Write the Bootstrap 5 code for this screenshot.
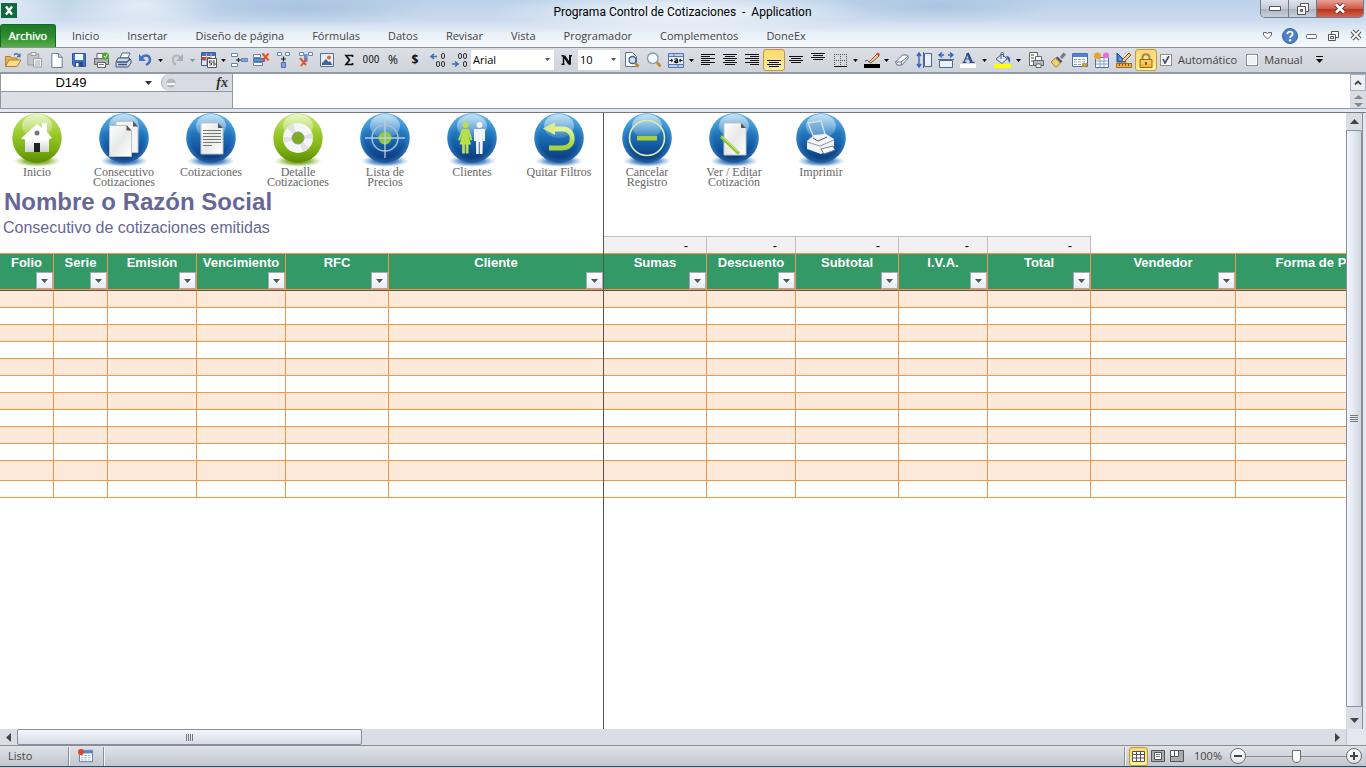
<!DOCTYPE html>
<html lang="es">
<head>
<meta charset="utf-8">
<meta name="viewport" content="width=device-width, initial-scale=1">
<title>Programa Control de Cotizaciones</title>
<link href="https://cdn.jsdelivr.net/npm/bootstrap@5.3.0/dist/css/bootstrap.min.css" rel="stylesheet">
<style>
  body { font-family: "Open Sans", "Noto Sans", sans-serif; font-size: 11px; line-height: 16px; color: #444; background: #fff; }
  button, select, input { font: inherit; color: inherit; }
  button { background: none; border: 0; padding: 0; }
  svg { display: block; flex: none; }

  /* Window caption and ribbon tabs */
  .chrome { background:
      radial-gradient(ellipse 60px 40px at 10px 0, rgba(255,255,255,.5), rgba(255,255,255,0)),
      radial-gradient(ellipse 80px 36px at 140px 4px, rgba(255,255,255,.55), rgba(255,255,255,0)),
      radial-gradient(ellipse 190px 22px at 682px 12px, rgba(255,255,255,.8), rgba(255,255,255,0)),
      radial-gradient(ellipse 140px 20px at 300px 8px, rgba(140,172,212,.45), rgba(140,172,212,0)),
      radial-gradient(ellipse 120px 18px at 940px 6px, rgba(140,172,212,.4), rgba(140,172,212,0)),
      linear-gradient(#bcd2e9 0, #cbdbee 20px, #e9f0f8 34px, #f6f8fb 47px);
    border-bottom: 1px solid #8a919b; }
  .caption-bar { height: 24px; }
  .caption-text { font-family: Roboto, "Open Sans", sans-serif; font-size: 12px; color: #000; }
  .app-mark { margin: 3px 0 0 1px; }
  .win-buttons { width: 104px; height: 18px; border: 1px solid #6d7c8e; border-top: 0; border-radius: 0 0 5px 5px; overflow: hidden; margin-right: 2px; }
  .win-buttons button { width: 28px; background: linear-gradient(#dde5ee, #c4cbd4 50%, #a9b1bc 51%, #c9d2dc); border-right: 1px solid #6d7c8e; }
  .win-buttons .btn-shut { background: linear-gradient(#e6a296, #cf5b48 50%, #b8301b 51%, #d4664b); border: 0; }
  .tab-strip { height: 23px; }
  .tab-file { width: 56px; height: 23px; color: #fff; background: linear-gradient(#1f7a26, #2d8b30 50%, #58b040); border: 1px solid #17672a; border-bottom: 0; border-radius: 3px 3px 0 0; text-shadow: 0 0 1px #fff; }
  .tab-list { gap: 28px; margin-left: 16px; }
  .tab-list a { color: #444; text-decoration: none; }
  .tab-tools { gap: 6px; margin-right: 2px; }
  .tab-tools button { width: 16px; height: 16px; }

  /* Quick toolbar */
  .quickbar { height: 26px; background: linear-gradient(#dcdfe5, #cfd3da); border-bottom: 2px solid #8f98a5; padding-left: 2px; }
  .quickbar button { width: 22px; height: 22px; display: flex; align-items: center; justify-content: center; }
  .quickbar .drop { width: 10px; padding-right: 2px; }
  .quickbar .drop-near { width: 8px; }
  .quickbar .drop-wide { width: 12px; }
  .is-on { background: linear-gradient(#fbd774, #ffe57c 60%, #fff2a0); border: 1px solid #c29a3c; border-radius: 3px; }
  .glyph { color: #111; font-size: 12px; }
  .glyph-thin { font-family: "Liberation Sans Narrow", "DejaVu Sans Condensed", sans-serif; font-size: 10px; }
  .pick { position: relative; background: #fff; height: 20px; margin: 0 1px; }
  .pick select { appearance: none; width: 100%; height: 20px; border: 0; background: none; padding: 0 2px; color: #000; }
  .pick svg { position: absolute; right: 4px; top: 8px; pointer-events: none; }
  .pick-font { width: 83px; }
  .pick-size { width: 42px; }
  .tick { gap: 6px; margin-left: 3px; margin-right: 6px; font-size: 11px; }
  .tick input { appearance: none; width: 12px; height: 12px; border: 1px solid #8c8f94; background: #f0f1f3; box-shadow: inset 0 0 0 1px #fff; margin: 0; }
  .tick input:checked { background: #f0f1f3 url("data:image/svg+xml,%3Csvg xmlns='http://www.w3.org/2000/svg' viewBox='0 0 10 10'%3E%3Cpath d='M2 4l2 4 4-7' fill='none' stroke='%23454b55' stroke-width='1.6'/%3E%3C/svg%3E") center/10px no-repeat; }

  /* Formula bar */
  .formula { height: 35px; border-bottom: 1px solid #8f98a5; }
  .formula-side { width: 233px; background: #dcdfe5; border-right: 1px solid #8f98a5; border-left: 1px solid #8f98a5; }
  .formula-name { height: 18px; border-bottom: 1px solid #8f98a5; }
  .name-box { width: 160px; background: #fff; }
  .name-box input { width: 140px; border: 0; outline: 0; background: none; text-align: center; font: 13px/17px "Liberation Sans", Arial, sans-serif; color: #000; }
  .fx-wrap { background: #fff; }
  .fx-area { background: #d8dce2; border: 1px solid #a9b0ba; border-width: 0 0 0 1px; border-radius: 9px 0 0 9px; }
  .fx-area b { font: italic bold 14px/17px "Liberation Serif", serif; color: #333; }
  .formula textarea { border: 0; outline: 0; resize: none; background: #fff; }
  .formula-spin { width: 16px; background: #d9dce2; }
  .formula-spin .up { height: 17px; border: 1px solid #a9b0ba; background: #eceff3; }
  .splitter { height: 4px; background: #e4e8f4; border-bottom: 1px solid #77797d; }

  /* Worksheet */
  .pane-left { width: 604px; border-right: 1px solid #555; }
  .pane-top-left { height: 140px; }
  .pane-top-right { height: 123px; padding-left: 6px; }
  .orbs { gap: 13px; height: 75px; }
  .orb { width: 74px; font: 12px/10px "Liberation Serif", serif; color: #666; display: flex; flex-direction: column; align-items: center; }
  .orb span { white-space: nowrap; }
  .company { font: bold 24px/28px "Liberation Sans", Arial, sans-serif; color: #666699; padding-left: 4px; margin: 0; }
  .subtitle { font: 16px/24px "Liberation Sans", Arial, sans-serif; color: #666699; padding-left: 3px; margin: 0; }
  .grid { table-layout: fixed; border-collapse: separate; border-spacing: 0; font: 13px/16px "Liberation Sans", Arial, sans-serif; color: #000; }
  .grid td, .grid th { padding: 0; overflow: hidden; }
  .grid .totals td { height: 17px; background: #f1f1f1; border-top: 1px solid #bfbfbf; border-right: 1px solid #bfbfbf; text-align: right; vertical-align: bottom; padding: 2px 18px 0 0; line-height: 14px; }
  .grid .totals .blank { background: none; border: 0; }
  .grid th { height: 38px; background: #339966; color: #fff; text-align: center; vertical-align: top; border-top: 1px solid #f79646; border-right: 1px solid #f79646; border-bottom: 1px solid #555; box-shadow: inset 0 -1px #f79646; }
  .grid th > div { height: 36px; padding: 1px 0 1px 0; }
  .grid tbody td { height: 17px; border-right: 1px solid #f79646; border-bottom: 1px solid #f79646; }
  .grid tbody tr:nth-child(odd) td { background: #fde9d9; }
  .grid tbody tr:nth-child(11) td { height: 20px; }
  .pane-left .grid th:last-child, .pane-left .grid td:last-child { border-right: 0; }
  .filter { width: 17px; height: 17px; background: linear-gradient(#fff, #e6ecf6); border: 1px solid #a5a9b5; display: flex; align-items: center; justify-content: center; }
  .w54 { width: 54px; } .w89 { width: 89px; } .w103 { width: 103px; } .w145 { width: 145px; } .w174 { width: 174px; } .w214 { width: 214px; }

  /* Scroll bars */
  .vbar { width: 20px; background: #e4e8ee; }
  .vbar-track { width: 17px; border-right: 1px solid #84909e; background: #d9dee6; }
  .vbar button { width: 16px; height: 17px; display: flex; align-items: center; justify-content: center; }
  .v-thumb { width: 16px; margin-bottom: 5px; border: 1px solid #84909e; border-radius: 1px; background: linear-gradient(90deg, #f2f5fa, #e3e8f0 50%, #cfd5de); }
  .hbar { height: 16px; background: #d9dee6; }
  .hbar button { width: 17px; height: 16px; display: flex; align-items: center; justify-content: center; }
  .h-thumb { width: 345px; height: 16px; border: 1px solid #84909e; border-radius: 2px; background: linear-gradient(#f4f6fa, #e2e7ee 60%, #d6dbe4); }
  .corner { width: 20px; background: #e4e8ee; border-left: 1px solid #c2c7cf; }

  /* Status bar */
  .status { height: 21px; background: linear-gradient(#dfe2e6, #c3c7cb); border-top: 1px solid #8a8f96; }
  .status .ruled { border-right: 1px solid #8a8f96; box-shadow: 1px 0 #f3f4f6; height: 19px; }
  .status-mode { width: 69px; }
  .status-macro { width: 35px; }
  .status button { width: 19px; height: 19px; display: flex; align-items: center; justify-content: center; }
  .zoomer { appearance: none; width: 100px; height: 16px; margin: 0; background: linear-gradient(#8a8f96, #8a8f96) center/100% 1px no-repeat; }
  .zoomer::-webkit-slider-thumb { appearance: none; width: 9px; height: 13px; background: #fafbfc; border: 1px solid #6a7078; border-radius: 1px 1px 5px 5px; }
  .status .round { width: 16px; height: 16px; border: 1px solid #6a7078; border-radius: 50%; background: linear-gradient(#fff, #e2e4e8); }
  .desk { height: 2px; background: #bccfe6; border-top: 1px solid #3c4752; }
</style>
</head>
<body class="vh-100 d-flex flex-column overflow-hidden">

<svg width="0" height="0" class="position-absolute" aria-hidden="true">
  <defs>
    <linearGradient id="gBlue" x1="0" y1="0" x2="0" y2="1"><stop offset="0" stop-color="#6cbcec"/><stop offset=".4" stop-color="#2277bd"/><stop offset=".75" stop-color="#0f4f98"/><stop offset="1" stop-color="#0a3270"/></linearGradient>
    <radialGradient id="gRim"><stop offset="0" stop-color="#3fa0e0" stop-opacity="0"/><stop offset=".78" stop-color="#3fa0e0" stop-opacity="0"/><stop offset="1" stop-color="#4fa6e2" stop-opacity=".4"/></radialGradient>
    <linearGradient id="gGreen" x1="0" y1="0" x2="0" y2="1"><stop offset="0" stop-color="#c9e67a"/><stop offset=".4" stop-color="#9bcb2c"/><stop offset=".75" stop-color="#7aae10"/><stop offset="1" stop-color="#5c8a06"/></linearGradient>
    <linearGradient id="gShine" x1="0" y1="0" x2="0" y2="1"><stop offset="0" stop-color="#fff" stop-opacity=".6"/><stop offset="1" stop-color="#fff" stop-opacity=".12"/></linearGradient>
    <linearGradient id="gPaper" x1="0" y1="0" x2="1" y2="1"><stop offset="0" stop-color="#fff"/><stop offset=".5" stop-color="#e8eaea"/><stop offset="1" stop-color="#fff"/></linearGradient>
    <linearGradient id="gHouse" x1="0" y1="0" x2="0" y2="1"><stop offset="0" stop-color="#fff"/><stop offset="1" stop-color="#cfd2d2"/></linearGradient>
    <radialGradient id="gShB"><stop offset="0" stop-color="#1d5ea6"/><stop offset=".5" stop-color="#2f70b4" stop-opacity=".8"/><stop offset="1" stop-color="#6fa6d8" stop-opacity="0"/></radialGradient>
    <radialGradient id="gShG"><stop offset="0" stop-color="#5d8c0a"/><stop offset=".5" stop-color="#7ba62a" stop-opacity=".8"/><stop offset="1" stop-color="#a8cc60" stop-opacity="0"/></radialGradient>
    <linearGradient id="gLeaf" x1="0" y1="0" x2="0" y2="1"><stop offset="0" stop-color="#e2f59a"/><stop offset="1" stop-color="#a5d23a"/></linearGradient>
  </defs>
  <symbol id="orbBlue" viewBox="0 0 50 54"><ellipse cx="25" cy="48" rx="24" ry="6" fill="url(#gShB)"/><circle cx="25" cy="25" r="24.700" fill="url(#gBlue)"/><circle cx="25" cy="25" r="24.700" fill="url(#gRim)"/><ellipse cx="25" cy="13" rx="15" ry="12" fill="url(#gShine)"/></symbol>
  <symbol id="orbGreen" viewBox="0 0 50 54"><ellipse cx="25" cy="48" rx="24" ry="6" fill="url(#gShG)"/><circle cx="25" cy="25" r="24.700" fill="url(#gGreen)"/><ellipse cx="25" cy="13" rx="15" ry="12" fill="url(#gShine)"/></symbol>
  <symbol id="down" viewBox="0 0 7 4"><path d="M0 0h7L3.500 4z"/></symbol>
  <symbol id="sheet" viewBox="0 0 16 16"><path d="M2.500.5h7l4 4v11h-11z" fill="#fff" stroke="#5d7396"/><path d="M9.500.5v4h4" fill="#cfdcec" stroke="#5d7396"/></symbol>
  <symbol id="minigrid" viewBox="0 0 16 16"><path d="M.5 1.500h15v13H.5z" fill="#fff" stroke="#4d73ad"/><path d="M1 2h14v3H1z" fill="#4f82d4"/><path d="M2 7.500h12M2 10h12M2 12.500h12" stroke="#8ba7d2" stroke-dasharray="3 1"/></symbol>
</svg>

<header class="chrome flex-shrink-0">
  <div class="caption-bar d-flex align-items-start">
    <svg width="16" height="15" viewBox="0 0 16 15" class="app-mark"><path fill="#0f6b3d" d="M0 0h16v15H0z"/><path d="M5 3.500l6 8M11 3.500l-6 8" stroke="#fff" stroke-width="2.400"/></svg>
    <div class="caption-text flex-grow-1 text-center pt-1 ps-5 ms-5 pe-2"><span style="white-space:pre">Programa Control de Cotizaciones  -  Application</span></div>
    <div class="win-buttons d-flex">
      <button class="d-flex align-items-center justify-content-center" aria-label="Minimizar"><svg width="12" height="5"><path d="M.5.5h11v4H.5z" fill="#fff" stroke="#555"/></svg></button>
      <button class="d-flex align-items-center justify-content-center" aria-label="Restaurar"><svg width="12" height="12" viewBox="0 0 12 12"><path d="M3.500.5h8v8h-8z" fill="#fff" stroke="#555"/><path d="M.5 3.500h8v8h-8z" fill="#fff" stroke="#555"/><path d="M3.500 6.500h2v2h-2z" fill="#aaa" stroke="#555"/></svg></button>
      <button class="btn-shut flex-grow-1 d-flex align-items-center justify-content-center" aria-label="Cerrar"><svg width="12" height="11" viewBox="0 0 12 11"><path d="M2 1.500l8 8M10 1.500l-8 8" stroke="#5a3030" stroke-width="4.500"/><path d="M2 1.500l8 8M10 1.500l-8 8" stroke="#fff" stroke-width="2.600"/></svg></button>
    </div>
  </div>
  <div class="tab-strip d-flex align-items-center">
    <button class="tab-file">Archivo</button>
    <nav class="tab-list d-flex flex-grow-1">
      <a href="#">Inicio</a><a href="#">Insertar</a><a href="#">Diseño de página</a><a href="#">Fórmulas</a><a href="#">Datos</a><a href="#">Revisar</a><a href="#">Vista</a><a href="#">Programador</a><a href="#">Complementos</a><a href="#">DoneEx</a>
    </nav>
    <div class="tab-tools d-flex">
      <button aria-label="Minimizar la cinta"><svg width="16" height="16" viewBox="0 0 16 16"><path d="M3.500 4.500h3l1 1.500 1-1.500h3v2.500l-4 4-4-4z" fill="#fff" stroke="#666"/></svg></button>
      <button aria-label="Ayuda"><svg width="16" height="16" viewBox="0 0 16 16"><circle cx="8" cy="8" r="7.500" fill="#4a80cf" stroke="#2f62b2"/><path d="M5.300 6.200C5.500 2.600 10.800 2.800 10.600 6c-.1 1.700-2.500 1.800-2.500 4" fill="none" stroke="#fff" stroke-width="1.800"/><circle cx="8.100" cy="12.200" r="1.200" fill="#fff"/></svg></button>
      <button aria-label="Minimizar libro"><svg width="16" height="16" viewBox="0 0 16 16"><rect x="2.500" y="6.500" width="10" height="4" rx="1" fill="#fff" stroke="#666"/></svg></button>
      <button aria-label="Restaurar libro"><svg width="16" height="16" viewBox="0 0 16 16"><path d="M5.500 3.500h7v6h-7z" fill="#fff" stroke="#555"/><path d="M2.500 6.500h7v6h-7zM4.500 8.500h3v2h-3z" fill="#fff" stroke="#555"/></svg></button>
      <button aria-label="Cerrar libro"><svg width="16" height="16" viewBox="0 0 16 16"><path d="M4 3l8 8M12 3l-8 8" stroke="#555" stroke-width="4"/><path d="M4 3l8 8M12 3l-8 8" stroke="#fff" stroke-width="1.800"/></svg></button>
    </div>
  </div>
</header>

<div class="quickbar d-flex align-items-center flex-shrink-0" role="toolbar" aria-label="Acceso rápido">
  <button aria-label="Abrir"><svg width="18" height="16" viewBox="0 0 18 16"><path d="M1.500 14V4.500h5l1 1.500H13v3" fill="#e9b54a" stroke="#b08030"/><path d="M1.500 14.500L5 8h12l-4 6.500z" fill="#fbdc8c" stroke="#b08030"/><path d="M10 3c2-2 4-1.500 5.500 1M16 1.500V4.500h-3" fill="none" stroke="#3f6fb5" stroke-width="1.300"/></svg></button>
  <button aria-label="Pegar"><svg width="16" height="16" viewBox="0 0 16 16"><path d="M.8 2h11v11H.8z" fill="#c3c6ca" stroke="#9a9da3"/><path d="M4 .5h5v3H4z" fill="#eee" stroke="#999"/><path d="M6.500 6.500h8v8.500h-8z" fill="#f3f4f5" stroke="#9a9da3"/><path d="M8 9h5M8 11h5M8 13h5" stroke="#a9acb1"/></svg></button>
  <button aria-label="Nuevo"><svg width="16" height="15"><use href="#sheet"/></svg></button>
  <button aria-label="Guardar"><svg width="16" height="16" viewBox="0 0 16 16"><path d="M1.500 1.500h13v13H3l-1.500-2z" fill="#3f73d0" stroke="#34549a"/><path d="M4 2h8v6H4z" fill="#f4f8ff"/><path d="M4 10h8v4.500H4z" fill="#2a4a88"/><path d="M5 11h2.500v3.500H5z" fill="#fff"/></svg></button>
  <button aria-label="Impresión rápida"><svg width="17" height="16" viewBox="0 0 17 16"><path d="M4 1.500h8v5H4z" fill="#fff" stroke="#666"/><path d="M1.500 6.500h14v6h-14z" fill="#a8adb5" stroke="#60666f"/><path d="M4.500 10.500h8v5h-8z" fill="#fff" stroke="#666"/><path d="M6 12.500h5" stroke="#777"/><circle cx="12.500" cy="4" r="3.500" fill="#4aa832"/><path d="M11 4l1.300 1.500 2-3" stroke="#fff" fill="none"/></svg></button>
  <button aria-label="Imprimir"><svg width="17" height="16" viewBox="0 0 17 16"><path d="M7 1h8l-2 5H5z" fill="#fff" stroke="#4a688f"/><path d="M3 6h11l2 2v3l-3 4H1v-5z" fill="#cdd9ea" stroke="#3d5578"/><path d="M2 10h10l3-3M3 12.500h9" stroke="#3d5578" fill="none" stroke-width="1.300"/></svg></button>
  <button aria-label="Deshacer"><svg width="16" height="16" viewBox="0 0 16 16"><path d="M4.500 6c3-4 8.500-3 8.500 1.500 0 3-2 4.500-4 5.500" fill="none" stroke="#3f70c0" stroke-width="2.400"/><path d="M2 2v7h7z" fill="#3b74d0"/></svg></button><button class="drop" aria-label="Más deshacer"><svg width="5" height="3"><use href="#down"/></svg></button>
  <button aria-label="Rehacer"><svg width="16" height="16" viewBox="0 0 16 16"><path d="M11.500 6C8.500 2 4 3 4 7.500c0 3 1 4.500 3 5.500" fill="none" stroke="#b3b8bf" stroke-width="2.200"/><path d="M14 2v7H7z" fill="#aab0b8"/></svg></button><button class="drop" aria-label="Más rehacer"><svg width="5" height="3" fill="#8d9299"><use href="#down"/></svg></button>
  <button aria-label="Tabla"><svg width="16" height="16" viewBox="0 0 16 16"><path d="M.5.500h14v13H.5z" fill="#fff" stroke="#3d5c95"/><path d="M1 1h13v3H1z" fill="#4471b8"/><path d="M1 5h4v3H1zM6 5h4v2H6z" fill="#d8402a"/><path d="M1 9h4v4H1z" fill="#dfe8f5"/><path d="M5.500 1v12M10 1v7M1 8.500h7" stroke="#9fb2d2"/><path d="M6.500 6.500h9v9h-9z" fill="#fff" stroke="#555"/><path d="M8 9h3M8.500 9v2h2v2h-2M12 9h2M12 9v2h2v2h-2" stroke="#444" fill="none"/></svg></button><button class="drop drop-near" aria-label="Más tabla"><svg width="5" height="3"><use href="#down"/></svg></button>
  <button aria-label="Insertar filas"><svg width="17" height="16" viewBox="0 0 17 16"><g fill="#fff" stroke="#6a85b0"><path d="M.5 1.500h6v3h-6zM.5 11.500h6v3h-6z"/><path d="M10.500 6.500h6v3h-6z" fill="#7aa5e6"/></g><path d="M5 8h5M7.500 6v4" stroke="#222" stroke-width="1.200"/></svg></button>
  <button aria-label="Eliminar filas"><svg width="17" height="16" viewBox="0 0 17 16"><path d="M.5 2.500h7v3h-7zM.5 10.500h9v3h-9z" fill="#fff" stroke="#6a85b0"/><path d="M.5 6.500h11v3H.5z" fill="#5e93e2" stroke="#4870b0"/><path d="M9.500 1.500l6 7M15.500 1.500l-6 7" stroke="#e0562a" stroke-width="2"/></svg></button>
  <button aria-label="Insertar columnas"><svg width="15" height="16" viewBox="0 0 15 16"><path d="M1.500.5h4v3h-4zM9.500.5h4v3h-4z" fill="#fff" stroke="#6a85b0"/><path d="M5.500 10.500h4v5h-4z" fill="#7aa5e6" stroke="#4870b0"/><path d="M5 7h5M7.500 4.500v5" stroke="#222" stroke-width="1.200"/></svg></button>
  <button aria-label="Eliminar columnas"><svg width="15" height="16" viewBox="0 0 15 16"><path d="M1.500.5h4v3h-4zM10.500.5h4v3h-4z" fill="#fff" stroke="#6a85b0"/><path d="M6 2h3.500v8H6z" fill="#5e93e2"/><path d="M2 6l6 7M9 6l-6 8" stroke="#e0562a" stroke-width="2"/></svg></button>
  <button aria-label="Imagen"><svg width="16" height="16" viewBox="0 0 16 16"><path d="M1.500 1.500h13v13h-13z" fill="#e4f0fb" stroke="#5a6f92"/><path d="M3 13v-2l4-4 2.500 3 1.500-1 2.500 4z" fill="#41659c"/><circle cx="10" cy="5.500" r="2" fill="#e7671f"/></svg></button>
  <button class="glyph" aria-label="Autosuma"><svg width="10" height="12" viewBox="0 0 10 12"><path d="M8.500 3V1.500H2L5.500 6 2 10.500h6.500V9" fill="none" stroke="#111" stroke-width="1.700"/></svg></button>
  <button class="glyph glyph-thin">000</button>
  <button class="glyph">%</button>
  <button class="glyph fw-bold">$</button>
  <button aria-label="Aumentar decimales"><svg width="17" height="15" viewBox="0 0 17 15"><path d="M8 3.500H3M5 1L2 3.500 5 6" stroke="#3a6fc0" stroke-width="1.600" fill="none"/><g fill="none" stroke="#333"><rect x="12.500" y=".5" width="3" height="5" rx="1.500"/><rect x="7.500" y="8.500" width="3" height="5" rx="1.500"/><rect x="12.500" y="8.500" width="3" height="5" rx="1.500"/></g></svg></button>
  <button aria-label="Disminuir decimales"><svg width="17" height="15" viewBox="0 0 17 15"><path d="M1 11h5M4 8.500L7 11l-3 2.500" stroke="#3a6fc0" stroke-width="1.600" fill="none"/><g fill="none" stroke="#333"><rect x="12.500" y=".5" width="3" height="5" rx="1.500"/><rect x="7.500" y=".5" width="3" height="5" rx="1.500"/><rect x="12.500" y="8.500" width="3" height="5" rx="1.500"/></g></svg></button>
  <div class="pick pick-font"><select aria-label="Fuente"><option>Arial</option></select><svg width="5" height="3" fill="#555"><use href="#down"/></svg></div>
  <button aria-label="Negrita"><svg width="11" height="10" viewBox="0 0 11 10"><path d="M.5.8H3M8 .8h3M.5 9.200h3M2.500.8v8.400" stroke="#111" stroke-width="1.500"/><path d="M3 1l5.500 8" stroke="#111" stroke-width="2.600"/><path d="M9 .8v9" stroke="#111" stroke-width="2"/></svg></button>
  <div class="pick pick-size"><select aria-label="Tamaño"><option>10</option></select><svg width="5" height="3" fill="#555"><use href="#down"/></svg></div>
  <button aria-label="Vista previa"><svg width="16" height="16" viewBox="0 0 16 16"><path d="M1.500.5h7l4 4v10h-11z" fill="#fff" stroke="#5d7396"/><circle cx="8.500" cy="8" r="3.500" fill="#cfe4f7" stroke="#3d5c8b" stroke-width="1.300"/><path d="M11 11l3.500 3.500" stroke="#c08028" stroke-width="2.600"/></svg></button>
  <button aria-label="Zoom"><svg width="16" height="16" viewBox="0 0 16 16"><circle cx="6.800" cy="6.300" r="5.300" fill="#f2f7fc" stroke="#8a98ab" stroke-width="1.300"/><path d="M11 10.500l3.500 4" stroke="#c98a34" stroke-width="2.800"/></svg></button>
  <button aria-label="Combinar y centrar"><svg width="16" height="15" viewBox="0 0 16 15"><path d="M.5.5h15v14H.5z" fill="#b9d0ee" stroke="#5676aa"/><path d="M1 4h14v7H1z" fill="#e8f0fa"/><path d="M.5 3.500h15M.5 11.500h15M6 1v2M10 12v2" stroke="#5676aa"/><path d="M1.500 7.500h3M3 6l2 1.500L3 9M14.500 7.500h-3M13 6l-2 1.500L13 9" stroke="#222" fill="none"/><path d="M6.500 6.200c2-1 3-.2 3 1V10M9.500 8c-4-.5-4 2 0 1.500" stroke="#111" fill="none" stroke-width="1.200"/></svg></button><button class="drop" aria-label="Más combinar"><svg width="5" height="3"><use href="#down"/></svg></button>
  <button aria-label="Alinear a la izquierda"><svg width="14" height="12"><path d="M0 .5h14M0 2.500h9M0 4.500h14M0 6.500h9M0 8.500h14M0 10.500h9" stroke="#111"/></svg></button>
  <button aria-label="Centrar"><svg width="14" height="12"><path d="M0 .5h14M2 2.500h10M0 4.500h14M2 6.500h10M0 8.500h14M2 10.500h10" stroke="#111"/></svg></button>
  <button aria-label="Alinear a la derecha"><svg width="14" height="12"><path d="M0 .5h14M5 2.500h9M0 4.500h14M5 6.500h9M0 8.500h14M5 10.500h9" stroke="#111"/></svg></button>
  <button class="is-on" aria-label="Alinear abajo"><svg width="14" height="14"><path d="M0 7.500h14M2 9.500h10M0 11.500h14M2 13.500h10" stroke="#111"/></svg></button>
  <button aria-label="Alinear al medio"><svg width="14" height="8"><path d="M0 .5h14M2 2.500h10M0 4.500h14M2 6.500h10" stroke="#111"/></svg></button>
  <button aria-label="Alinear arriba"><svg width="14" height="14"><path d="M0 .5h14M2 2.500h10M0 4.500h14M2 6.500h10" stroke="#111"/></svg></button>
  <button aria-label="Bordes"><svg width="13" height="13"><path d="M.5 0v12M6.500 0v12M12.500 0v12M0 .5h13M0 6.500h13" stroke="#555" stroke-dasharray="1 1"/><path d="M0 12.500h13" stroke="#111"/></svg></button><button class="drop" aria-label="Más bordes"><svg width="5" height="3"><use href="#down"/></svg></button>
  <button aria-label="Color de línea"><svg width="16" height="16" viewBox="0 0 16 16"><path d="M0 12h16v4H0z" fill="#000"/><path d="M5 10l8-8 2 2-8 7z" fill="#f2c98c" stroke="#8f5b30"/><path d="M12 2l2-1.500 2 2L15 4z" fill="#d9442e"/><path d="M1 9.500c2-2 3-1 4 .5" stroke="#333" fill="none"/></svg></button><button class="drop drop-near" aria-label="Más línea"><svg width="5" height="3"><use href="#down"/></svg></button>
  <button aria-label="Borrar"><svg width="16" height="14" viewBox="0 0 16 14"><path d="M1.500 9l7-7H13l1.500 2.500L8 12H3z" fill="#fff" stroke="#5d6f92"/><path d="M1.500 9h5.500l7-5.500M7 9l1 3" fill="none" stroke="#5d6f92"/></svg></button>
  <button aria-label="Alto de fila"><svg width="16" height="16" viewBox="0 0 16 16"><path d="M3 2v12M1 4l2-3 2 3M1 12l2 3 2-3" stroke="#2f67bf" fill="none" stroke-width="1.400"/><path d="M7.500 0v16M15.500 1.500h-7v13h7z" fill="#e9f2fc" stroke="#4d6895"/></svg></button>
  <button aria-label="Ancho de columna"><svg width="16" height="16" viewBox="0 0 16 16"><path d="M1 3h5M10 3h5M4 .5L1 3l3 2.500M12 .5L15 3l-3 2.500" stroke="#2f67bf" fill="none" stroke-width="1.400"/><path d="M0 7.500h16M1.500 15.500v-7h13v7z" fill="#e9f2fc" stroke="#4d6895"/></svg></button>
  <button aria-label="Color de fuente"><svg width="16" height="16" viewBox="0 0 16 16"><path d="M0 12h16v4H0z" fill="#fff"/><path d="M4 10L7.500 1.500M5.500 7h5M2.500 10.300h4M9.500 10.300h5" fill="none" stroke="#2c4f8b" stroke-width="1.200"/><path d="M7.500 1l4 9" stroke="#2c4f8b" stroke-width="2.600"/></svg></button><button class="drop drop-wide" aria-label="Más color"><svg width="5" height="3"><use href="#down"/></svg></button>
  <button aria-label="Relleno"><svg width="17" height="16" viewBox="0 0 17 16"><path d="M0 12h17v4H0z" fill="#ff0"/><path d="M2 7l6-5 5 5-5 4.500z" fill="#dbe7f6" stroke="#48617f"/><path d="M7 7V1.500c0-1.500 2.500-1.500 2.500 0V5" fill="none" stroke="#48617f"/><path d="M12 4c4 0 5 3 3.500 7l-2-4z" fill="#3667b4"/></svg></button><button class="drop drop-wide" aria-label="Más relleno"><svg width="5" height="3"><use href="#down"/></svg></button>
  <button aria-label="Configurar impresión"><svg width="16" height="16" viewBox="0 0 16 16"><path d="M1.500.5h8v13h-8z" fill="#fff" stroke="#666"/><path d="M3 3h3M3 6h3M3 9h3" stroke="#444"/><path d="M7.500 4.500h6v4h-6z" fill="#fff" stroke="#666"/><path d="M5.500 8.500h10v5h-10z" fill="#b4b9c1" stroke="#60666f"/><path d="M8 12h5v3.500H8z" fill="#fff" stroke="#666"/></svg></button>
  <button aria-label="Copiar formato"><svg width="16" height="16" viewBox="0 0 16 16"><path d="M10 5l3.500-4.500L16 2.500 12 7z" fill="#6c7788"/><path d="M7.500 4.500l5 5-2 1.500-5-5z" fill="#435370"/><path d="M5.500 6l5 5L6 15.500 1 10z" fill="#f4cd6c" stroke="#a8802c"/></svg></button>
  <button aria-label="Propiedades"><svg width="16" height="16"><use href="#minigrid"/><path d="M10 11h5v3.500h-5z" fill="#dc9c38"/></svg></button>
  <button aria-label="Objetos"><svg width="16" height="16" viewBox="0 0 16 16"><path d="M1.500 5.500h13v10h-13z" fill="#fff" stroke="#4d73ad"/><path d="M2 9h12M2 12h12M6 6v9M10 6v9" stroke="#7fa0d3"/><circle cx="3.500" cy="4" r="3.500" fill="#e6a22e"/><circle cx="12" cy="3.500" r="3" fill="#e070d8"/></svg></button>
  <button aria-label="Modo diseño"><svg width="16" height="16" viewBox="0 0 16 16"><path d="M1 1v9h9z" fill="#3e78cc" stroke="#234f97"/><path d="M3.500 6v2h2z" fill="#d2d6dc"/><path d="M6 8l7-7 2 2-7 7z" fill="#f3c684" stroke="#8b5a31"/><path d="M.5 11.500h15v4H.5z" fill="#f0b13e" stroke="#a4681a"/><path d="M3.500 12v2M6.500 12v2M9.500 12v2M12.500 12v2" stroke="#7d4e12"/></svg></button>
  <button class="is-on" aria-label="Proteger hoja"><svg width="14" height="15" viewBox="0 0 14 15"><path d="M3.500 7V4.500c0-4.500 7-4.500 7 0V7" fill="none" stroke="#9a8a5c" stroke-width="2"/><path d="M1 6.500h12v8H1z" fill="#f0b93e" stroke="#99681b"/><path d="M2 8h10M2 10h10" stroke="#fbe08c"/><path d="M7 9v3M6 10h2" stroke="#333"/></svg></button>
  <label class="tick d-flex align-items-center"><input type="checkbox" checked> Automático</label>
  <label class="tick d-flex align-items-center"><input type="checkbox"> Manual</label>
  <button aria-label="Personalizar"><svg width="8" height="8"><path d="M0 .5h7" stroke="#111"/><path d="M0 3h7L3.500 7z" fill="#111"/></svg></button>
</div>

<div class="formula d-flex flex-shrink-0">
  <div class="formula-side">
    <div class="formula-name d-flex">
      <div class="name-box d-flex align-items-center"><input value="D149" aria-label="Cuadro de nombres"><svg width="7" height="4" class="ms-1" fill="#333"><use href="#down"/></svg></div>
      <div class="fx-wrap flex-grow-1 d-flex"><div class="fx-area flex-grow-1 d-flex align-items-center justify-content-between ps-1 pe-1"><svg width="10" height="10"><circle cx="5" cy="5" r="4.500" fill="#b4b9c0"/><path d="M1 6h8" stroke="#f4f5f7" stroke-width="2"/></svg><b>fx</b></div></div>
    </div>
  </div>
  <textarea class="flex-grow-1" aria-label="Barra de fórmulas"></textarea>
  <div class="formula-spin d-flex flex-column align-items-center">
    <button class="up w-100 d-flex align-items-center justify-content-center" aria-label="Contraer"><svg width="8" height="5"><path d="M1 4.500L4 1.500l3 3" fill="none" stroke="#444" stroke-width="1.800"/></svg></button>
    <button aria-label="Anterior" class="mt-1"><svg width="9" height="4"><path d="M0 4h9L4.500 0z" fill="#7f868f"/></svg></button>
    <button aria-label="Siguiente" class="mt-1"><svg width="9" height="4"><path d="M0 0h9L4.500 4z" fill="#7f868f"/></svg></button>
  </div>
</div>
<div class="splitter flex-shrink-0"></div>

<main class="d-flex flex-grow-1 overflow-hidden">
  <section class="pane-left flex-shrink-0 overflow-hidden">
    <div class="pane-top-left">
      <div class="orbs d-flex">
        <button class="orb"><svg width="50" height="54"><use href="#orbGreen"/><path d="M13 26h24v13H13z" fill="url(#gHouse)"/><path d="M9 25.500L25 11l5 4v-5h5v9l5 6-3 1.500H13z" fill="#fff"/><circle cx="25" cy="20" r="2.500" fill="#777"/><path d="M22 30h6v9h-6z" fill="#222"/></svg><span>Inicio</span></button>
        <button class="orb"><svg width="50" height="54"><use href="#orbBlue"/><path d="M17 8.500h17l5 5v26H17z" fill="#f5f5f5" stroke="#bfc4c8"/><path d="M34 8v5.500h5z" fill="#555"/><path d="M10.500 12.500h17l5 5v26h-22z" fill="url(#gPaper)" stroke="#b9bec2"/><path d="M27.500 12v5.500h5z" fill="#555"/></svg><span>Consecutivo</span><span>Cotizaciones</span></button>
        <button class="orb"><svg width="50" height="54"><use href="#orbBlue"/><path d="M15 10h17l5 5v26H15z" fill="url(#gPaper)" stroke="#bfc4c8"/><path d="M32 10v5h5z" fill="#555"/><path d="M17 17.500h18M17 20.500h18M17 23.500h18M17 26.500h18M17 29.500h18M17 32.500h9" stroke="#777" stroke-width="1.200"/></svg><span>Cotizaciones</span></button>
        <button class="orb"><svg width="50" height="54"><use href="#orbGreen"/><circle cx="25" cy="25" r="15" fill="#f4f5f5"/><path d="M25 25L14 15a15 15 0 0 1 6-4zM25 25l11 10a15 15 0 0 1-6 4zM25 25l14-5a15 15 0 0 1 1 6zM25 25l-14 5a15 15 0 0 1-1-6z" fill="#dfe1e2"/><circle cx="25" cy="25" r="6" fill="#7dae1a" stroke="#8e9192"/></svg><span>Detalle</span><span>Cotizaciones</span></button>
        <button class="orb"><svg width="50" height="54"><use href="#orbBlue"/><circle cx="25" cy="25" r="6.500" fill="#93c93a"/><circle cx="25" cy="25" r="13" fill="none" stroke="#a9bfd6" stroke-width="1.500"/><path d="M25 5v40M5 25h40" stroke="#b9cde0" stroke-width="1.300"/></svg><span>Lista de</span><span>Precios</span></button>
        <button class="orb"><svg width="50" height="54"><use href="#orbBlue"/><g fill="#b8e04a"><circle cx="18.500" cy="12" r="3"/><path d="M15 16h7l3.500 11-2 .5-2.500-7 3 11h-2.500v9h-2.800v-9h-.8v9h-2.800v-9h-2.600l3-11-2.500 7-2-.5z"/></g><g fill="#f2f4f6"><circle cx="32.500" cy="12" r="3"/><path d="M27 16h11v12h-2v-8l-.5 21h-2.800V29h-.9v12h-2.600L28.800 20v8H27z"/></g></svg><span>Clientes</span></button>
        <button class="orb"><svg width="50" height="54"><use href="#orbBlue"/><path d="M15 35h13c14 0 13-19 1-19H18" fill="none" stroke="url(#gLeaf)" stroke-width="5"/><path d="M9 15.500L21 9v13z" fill="#d7ef84"/></svg><span>Quitar Filtros</span></button>
      </div>
      <h1 class="company">Nombre o Razón Social</h1>
      <p class="subtitle">Consecutivo de cotizaciones emitidas</p>
    </div>
    <table class="grid" data-rows="12">
      <thead><tr>
        <th class="w54">Folio</th><th class="w54">Serie</th><th class="w89">Emisión</th><th class="w89">Vencimiento</th><th class="w103">RFC</th><th class="w214">Cliente</th>
      </tr></thead>
      <tbody></tbody>
    </table>
  </section>

  <section class="flex-grow-1 overflow-hidden">
    <div class="pane-top-right">
      <div class="orbs d-flex">
        <button class="orb"><svg width="50" height="54"><use href="#orbBlue"/><circle cx="25" cy="25" r="17.500" fill="none" stroke="#dcecaa" stroke-width="1.600"/><path d="M15 23h20v4.500H15z" fill="#a5d03a"/></svg><span>Cancelar</span><span>Registro</span></button>
        <button class="orb"><svg width="50" height="54"><use href="#orbBlue"/><path d="M15 10h17l5 5v27H15z" fill="url(#gPaper)" stroke="#bfc4c8"/><path d="M32 10v5h5z" fill="#555"/><path d="M12 23.500l18 17" stroke="#8fc42a" stroke-width="3.200"/><path d="M12.500 23l17 16" stroke="#e0f3a4"/></svg><span>Ver / Editar</span><span>Cotización</span></button>
        <button class="orb"><svg width="50" height="54"><use href="#orbBlue"/><path d="M12 10l13-2 4 13-11 4z" fill="#6eabdc" fill-opacity=".5" stroke="#d9e2ea" stroke-width="1.300"/><path d="M11 28l7-6 12-1 8 5v9l-13 6-14-5z" fill="#f3f4f5"/><path d="M11 29l13 4 14-6" fill="none" stroke="#8e99a5"/><path d="M17 25l5 3 9-4" fill="none" stroke="#555"/><path d="M25 36l12-3 2 4-11 4z" fill="#fff" stroke="#6b7a8a"/></svg><span>Imprimir</span></button>
      </div>
    </div>
    <table class="grid" data-rows="12">
      <thead>
        <tr class="totals"><td class="w103">-</td><td class="w89">-</td><td class="w103">-</td><td class="w89">-</td><td class="w103">-</td><td class="w145 blank"></td><td class="w174 blank"></td></tr>
        <tr><th>Sumas</th><th>Descuento</th><th>Subtotal</th><th>I.V.A.</th><th>Total</th><th>Vendedor</th><th>Forma de Pago</th></tr>
      </thead>
      <tbody></tbody>
    </table>
  </section>

  <div class="vbar flex-shrink-0">
    <div class="vbar-track h-100 d-flex flex-column">
      <button aria-label="Subir"><svg width="9" height="5"><path d="M0 5h9L4.500 0z" fill="#444"/></svg></button>
      <div class="v-thumb flex-grow-1 d-flex align-items-center justify-content-center"><svg width="8" height="7"><path d="M0 .5h8M0 2.500h8M0 4.500h8M0 6.500h8" stroke="#777"/></svg></div>
      <button aria-label="Bajar"><svg width="9" height="5"><path d="M0 0h9L4.500 5z" fill="#444"/></svg></button>
    </div>
  </div>
</main>

<div class="hbar d-flex flex-shrink-0">
  <button aria-label="Izquierda"><svg width="5" height="9"><path d="M5 0v9L0 4.500z" fill="#444"/></svg></button>
  <div class="h-thumb d-flex align-items-center justify-content-center"><svg width="8" height="7"><path d="M.5 0v7M2.500 0v7M4.500 0v7M6.500 0v7" stroke="#777"/></svg></div>
  <button class="ms-auto" aria-label="Derecha"><svg width="5" height="9"><path d="M0 0v9l5-4.500z" fill="#444"/></svg></button>
  <div class="corner"></div>
</div>

<footer class="status d-flex align-items-center flex-shrink-0">
  <div class="ruled status-mode ps-2 d-flex align-items-center">Listo</div>
  <div class="ruled status-macro d-flex align-items-center justify-content-center"><svg width="16" height="14"><use href="#minigrid"/><circle cx="3" cy="3" r="3" fill="#d8482a"/></svg></div>
  <div class="ruled ms-auto me-1"></div>
  <button class="is-on" aria-label="Normal"><svg width="13" height="11"><path d="M.5.5h12v10H.5zM.5 3.500h12M.5 7h12M4.500.5v10M8.500.5v10" fill="#fff" stroke="#555"/></svg></button>
  <button aria-label="Diseño de página"><svg width="14" height="12"><path d="M.5.5h13v11H.5z" fill="#a9adb2" stroke="#555"/><path d="M3.500 2.500h7v7h-7z" fill="#fff" stroke="#555"/><path d="M5 4.500h4M5 6.500h4" stroke="#777"/></svg></button>
  <button aria-label="Saltos de página"><svg width="14" height="12"><path d="M.5.5h13v11H.5z" fill="#a9adb2" stroke="#555"/><path d="M.5.5h4v6h-4zM4.500.5h4v6h-4z" fill="#fff" stroke="#555"/></svg></button>
  <span class="ms-2 me-2">100%</span>
  <button class="round" aria-label="Alejar"><svg width="8" height="2"><path d="M0 0h8v2H0z" fill="#444"/></svg></button>
  <input class="zoomer" type="range" min="0" max="100" value="50" aria-label="Zoom">
  <button class="round me-1" aria-label="Acercar"><svg width="8" height="8"><path d="M0 3h8v2H0zM3 0h2v8H3z" fill="#444"/></svg></button>
</footer>
<div class="desk flex-shrink-0"></div>

<script>
  // Add the filter button to each heading and fill both panes with empty rows.
  document.querySelectorAll('.grid').forEach(function (table) {
    var heads = table.querySelectorAll('th');
    heads.forEach(function (th) {
      var label = th.textContent;
      th.innerHTML = '<div class="d-flex flex-column justify-content-between text-nowrap"><span>' + label +
        '</span><button class="filter align-self-end" aria-label="Filtrar ' + label +
        '"><svg width="7" height="4" fill="#555"><use href="#down"/></svg></button></div>';
    });
    var cells = '<td></td>'.repeat(heads.length);
    table.tBodies[0].innerHTML = ('<tr>' + cells + '</tr>').repeat(Number(table.dataset.rows));
    var total = 0, widths = { w54: 54, w89: 89, w103: 103, w145: 145, w174: 174, w214: 214 };
    Array.from(table.rows[0].cells).forEach(function (c) { total += widths[c.classList[0]]; });
    table.style.width = total + 'px';
  });
</script>
<script src="https://cdn.jsdelivr.net/npm/bootstrap@5.3.0/dist/js/bootstrap.bundle.min.js"></script>
</body>
</html>
